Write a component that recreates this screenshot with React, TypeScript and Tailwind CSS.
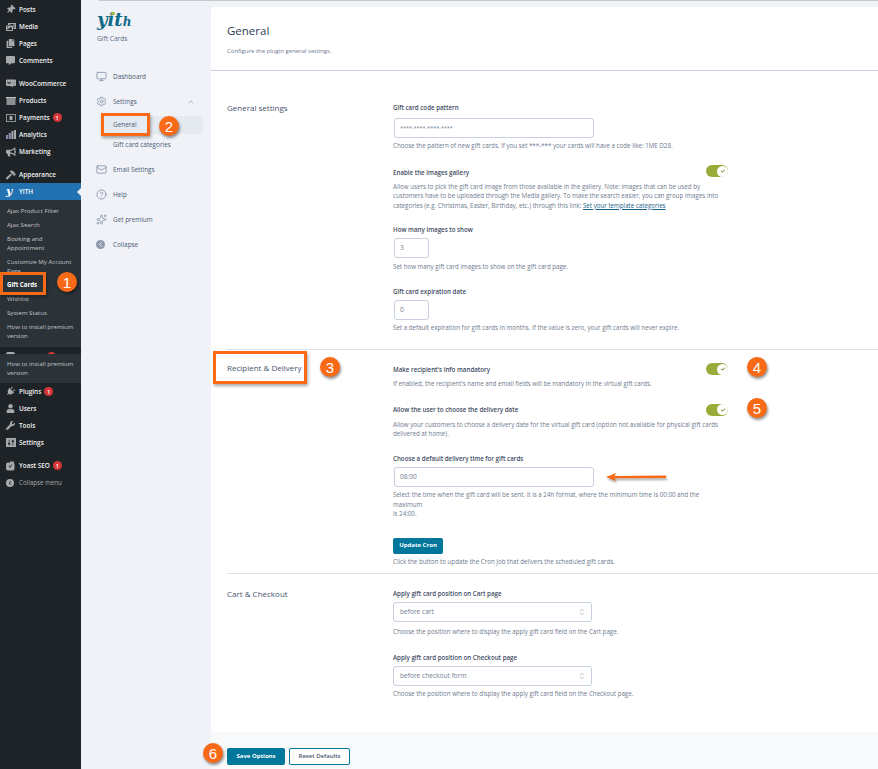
import React from "react";
import { FaThumbtack, FaPhotoVideo, FaCopy, FaCommentAlt, FaBullhorn, FaHammer, FaPlug, FaUser, FaWrench, FaCheck } from "react-icons/fa";
import { Monitor, Settings, Mail, CircleHelp, Sparkles, ChevronUp, ChevronLeft, ChevronsUpDown } from "lucide-react";

function Badge({ n }: { n: string }) {
  return <span className="ml-[3px] flex h-[9px] w-[9px] items-center justify-center rounded-full bg-[#d63638] text-[6px] font-semibold leading-none text-white">{n}</span>;
}

function Top({ icon, label, badge }: { icon: React.ReactNode; label: string; badge?: boolean }) {
  return (
    <div className="flex h-[17px] items-center pl-[6px] text-[6.4px] font-semibold text-[#f0f0f1]">
      <span className="flex w-[13px] text-[#a7aaad]">{icon}</span>
      <span>{label}</span>
      {badge && <Badge n="1" />}
    </div>
  );
}

function Sub({ children, cls }: { children: React.ReactNode; cls?: string }) {
  return <div className={`whitespace-nowrap pl-[7px] text-[6.1px] leading-[9px] ${cls ?? "text-[#c3c4c7]"}`}>{children}</div>;
}

function WooIcon() {
  return (
    <svg width="10" height="9" viewBox="0 0 10 9">
      <path d="M1 0.5h8a1 1 0 0 1 1 1v4.5a1 1 0 0 1-1 1H6.5L7 8.5 4.5 7H1a1 1 0 0 1-1-1V1.5a1 1 0 0 1 1-1z" fill="#a7aaad" />
      <path d="M1.5 2.5l.7 2.5.8-2 .8 2 .7-2.5M6.2 3.8h.6M8 3.8h.6" stroke="#1d2327" strokeWidth="0.6" fill="none" />
    </svg>
  );
}
function BoxIcon() {
  return (
    <svg width="10" height="8" viewBox="0 0 10 8">
      <rect x="0" y="0" width="10" height="1.6" fill="#c3c4c7" />
      <rect x="0.5" y="2" width="9" height="6" fill="#8c8f94" />
    </svg>
  );
}
function PayIcon() {
  return (
    <svg width="10" height="8" viewBox="0 0 10 8">
      <rect x="0.4" y="0.4" width="9.2" height="7.2" fill="none" stroke="#a7aaad" strokeWidth="0.8" />
      <rect x="3.5" y="2" width="3" height="4" fill="#a7aaad" />
    </svg>
  );
}
function BarsIcon() {
  return (
    <svg width="10" height="9" viewBox="0 0 10 9">
      <rect x="0" y="5" width="2" height="4" fill="#8d86a8" />
      <rect x="2.7" y="3" width="2" height="6" fill="#9a95b5" />
      <rect x="5.4" y="1" width="2" height="8" fill="#a7aaad" />
      <rect x="8" y="0" width="2" height="9" fill="#a7aaad" />
    </svg>
  );
}
function SlidersIcon() {
  return (
    <svg width="10" height="9" viewBox="0 0 10 9">
      <rect x="0" y="0" width="10" height="9" rx="0.5" fill="#a7aaad" />
      <path d="M3.2 1.5v6M6.8 1.5v6" stroke="#1d2327" strokeWidth="0.7" />
      <rect x="2.2" y="5" width="2" height="1.6" fill="#1d2327" />
      <rect x="5.8" y="2.4" width="2" height="1.6" fill="#1d2327" />
    </svg>
  );
}
function YoastIcon() {
  return (
    <svg width="10" height="10" viewBox="0 0 10 10">
      <rect x="0" y="1.5" width="8.5" height="8" rx="2" fill="#a7aaad" />
      <path d="M4 0.5h4l-2 8z" fill="#a7aaad" />
      <path d="M3 4.5l1.2 2 1.6-3" stroke="#1d2327" strokeWidth="0.8" fill="none" />
    </svg>
  );
}

function WpSidebar() {
  return (
    <aside className="flex h-full w-[81px] shrink-0 flex-col overflow-hidden bg-[#1d2327] pt-px">
      <Top icon={<FaThumbtack size={9} className="rotate-45" />} label="Posts" />
      <Top icon={<FaPhotoVideo size={10} />} label="Media" />
      <Top icon={<FaCopy size={9} />} label="Pages" />
      <Top icon={<FaCommentAlt size={9} />} label="Comments" />
      <div className="h-[6px]" />
      <Top icon={<WooIcon />} label="WooCommerce" />
      <Top icon={<BoxIcon />} label="Products" />
      <Top icon={<PayIcon />} label="Payments" badge />
      <Top icon={<BarsIcon />} label="Analytics" />
      <Top icon={<FaBullhorn size={10} />} label="Marketing" />
      <div className="h-[6px]" />
      <Top icon={<FaHammer size={10} />} label="Appearance" />
      <div className="relative flex h-[17px] items-center bg-[#2271b1] pl-[6px] text-[6.4px] font-semibold text-white">
        <span className="w-[13px] font-['DejaVu_Serif'] text-[11px] font-bold italic leading-none">y</span>
        <span>YITH</span>
        <span className="absolute right-0 top-[5px] h-0 w-0 border-y-[4px] border-r-[4px] border-y-transparent border-r-[#f0f2f7]" />
      </div>
      <div className="flex flex-col bg-[#2c3338] pb-[7px] pt-[6px]">
        <Sub cls="mb-[5px] text-[#c3c4c7]">Ajax Product Filter</Sub>
        <Sub cls="mb-[5px] text-[#c3c4c7]">Ajax Search</Sub>
        <Sub cls="mb-[5px] text-[#c3c4c7]">Booking and<br />Appointment</Sub>
        <Sub cls="mb-[5px] text-[#c3c4c7]">Customize My Account<br />Page</Sub>
        <Sub cls="mb-[5px] font-bold text-white">Gift Cards</Sub>
        <Sub cls="mb-[5px] text-[#c3c4c7]">Wishlist</Sub>
        <Sub cls="mb-[5px] text-[#c3c4c7]">System Status</Sub>
        <Sub>How to install premium<br />version</Sub>
      </div>
      <div className="flex h-[7px] items-start overflow-hidden pl-[6px] pt-[5px] text-[6.4px] font-semibold leading-[9px] text-[#f0f0f1]">
        <span className="w-[13px]"><span className="block h-[9px] w-[9px] rounded-[2px] bg-[#a7aaad]" /></span>
        <span>Elem</span>
        <span className="ml-[10px]"><Badge n="1" /></span>
      </div>
      <div className="bg-[#2c3338] pb-[6px] pt-[5px]">
        <Sub>How to install premium<br />version</Sub>
      </div>
      <Top icon={<FaPlug size={9} className="rotate-45" />} label="Plugins" badge />
      <Top icon={<FaUser size={9} />} label="Users" />
      <Top icon={<FaWrench size={9} />} label="Tools" />
      <Top icon={<SlidersIcon />} label="Settings" />
      <div className="h-[6px]" />
      <Top icon={<YoastIcon />} label="Yoast SEO" badge />
      <div className="flex h-[17px] items-center pl-[6px] text-[6.2px] text-[#a7aaad]">
        <span className="mr-[5px] flex h-[8px] w-[8px] items-center justify-center rounded-full bg-[#a7aaad]"><ChevronLeft size={6} strokeWidth={4} className="text-[#1d2327]" /></span>
        Collapse menu
      </div>
    </aside>
  );
}

function NavItem({ icon, label }: { icon: React.ReactNode; label: string }) {
  return (
    <div className="flex h-[25px] items-center pl-[15px] text-[6.4px] font-medium text-[#4a5a75]">
      <span className="flex w-[17px] text-[#8d99ae]">{icon}</span>
      {label}
    </div>
  );
}

function PluginNav() {
  return (
    <nav className="flex h-full w-[130px] shrink-0 flex-col pt-[8px]">
      <div className="relative ml-[16px] h-[25px] whitespace-nowrap pt-[2px] font-['DejaVu_Serif'] text-[18px] font-bold italic leading-[20px] text-[#0f6b85]">
        yit<span className="text-[12px]">h</span>
        <span className="absolute left-[14px] top-[4px] h-[3px] w-[4px] rounded-full bg-[#9dbb3c]" />
      </div>
      <div className="ml-[16px] mt-[1px] text-[6.6px] leading-[9px] text-[#5b6b84]">Gift Cards</div>
      <div className="h-[21px]" />
      <NavItem icon={<Monitor size={11} />} label="Dashboard" />
      <div className="flex h-[25px] items-center pl-[15px] pr-[16px] text-[6.4px] font-medium text-[#4a5a75]">
        <span className="flex w-[17px] text-[#8d99ae]"><Settings size={11} /></span>
        <span className="flex-1">Settings</span>
        <ChevronUp size={8} className="text-[#8d99ae]" />
      </div>
      <div className="ml-[22px] mr-[8px] mt-[2px] flex h-[18px] items-center rounded-[3px] bg-[#e5eaf1] pl-[10px] text-[6.4px] font-medium text-[#4a5a75]">General</div>
      <div className="mb-[2px] flex h-[21px] items-center pl-[32px] text-[6.4px] font-medium text-[#4a5a75]">Gift card categories</div>
      <NavItem icon={<Mail size={11} />} label="Email Settings" />
      <NavItem icon={<CircleHelp size={11} />} label="Help" />
      <NavItem icon={<Sparkles size={11} />} label="Get premium" />
      <NavItem icon={<span className="flex h-[9px] w-[9px] items-center justify-center rounded-full bg-[#8d99ae]"><ChevronLeft size={7} strokeWidth={3} className="text-white" /></span>} label="Collapse" />
    </nav>
  );
}

function Toggle() {
  return (
    <span className="relative flex h-[12px] w-[22px] shrink-0 items-center rounded-full bg-[#9aab39]">
      <span className="absolute right-0 flex h-[11px] w-[11px] items-center justify-center rounded-full bg-white">
        <FaCheck size={4} className="text-[#7b8c2e]" />
      </span>
    </span>
  );
}

function Label({ children, cls }: { children: React.ReactNode; cls?: string }) {
  return <div className={`text-[6.2px] font-semibold leading-[9px] text-[#3f4c63] ${cls ?? ""}`}>{children}</div>;
}

function Help({ children, cls }: { children: React.ReactNode; cls?: string }) {
  return <p className={`text-[6.2px] leading-[9.5px] text-[#6d7a8e] ${cls ?? ""}`}>{children}</p>;
}

function Field({ value, cls, select, small }: { value: string; cls: string; select?: boolean; small?: boolean }) {
  return (
    <div className={`flex h-[20px] items-center justify-between rounded-[3px] border border-[#c6d0de] bg-white pl-[5px] pr-[5px] text-[#707c8f] ${small ? "text-[5.4px]" : "text-[6.6px]"} ${cls}`}>
      <span>{value}</span>
      {select && <ChevronsUpDown size={8} className="text-[#8d99ae]" />}
    </div>
  );
}

function SectionTitle({ children }: { children: React.ReactNode }) {
  return <div className="w-[163px] shrink-0 text-[8px] font-medium leading-[10px] text-[#47556c]">{children}</div>;
}

function Main() {
  return (
    <main className="mt-[7px] flex h-[762px] min-w-0 flex-1 flex-col rounded-tl-[4px] bg-white">
      <header className="h-[64px] shrink-0 border-b border-[#ccd3e0] pl-[16px] pt-[16px]">
        <h1 className="text-[11.5px] font-medium leading-[16px] text-[#2f3b4f]">General</h1>
        <p className="mt-[8px] text-[6px] leading-[8px] text-[#6d7a8e]">Configure the plugin general settings.</p>
      </header>

      <section className="ml-[16px] flex h-[279px] shrink-0 border-b border-[#e0e2e6] pt-[32px]">
        <SectionTitle>General settings</SectionTitle>
        <div className="ml-[3px] w-[335px]">
          <Label>Gift card code pattern</Label>
          <Field value="****-****-****-****" small cls="ml-px mt-[6px] w-[200px]" />
          <Help cls="mt-[3px]">Choose the pattern of new gift cards. If you set ***-*** your cards will have a code like: 1ME D28.</Help>
          <div className="mt-[14.5px] flex items-start justify-between">
            <Label cls="mt-[3px]">Enable the images gallery</Label>
            <Toggle />
          </div>
          <Help cls="mt-[4.5px]">Allow users to pick the gift card image from those available in the gallery. Note: images that can be used by<br />customers have to be uploaded through the Media gallery. To make the search easier, you can group images into<br />categories (e.g. Christmas, Easter, Birthday, etc.) through this link: <span className="text-[#1a5f8a] underline">Set your template categories</span></Help>
          <Label cls="mt-[14.5px]">How many images to show</Label>
          <Field value="3" cls="ml-px mt-[4.5px] w-[35px]" />
          <Help cls="mt-[4px]">Set how many gift card images to show on the gift card page.</Help>
          <Label cls="mt-[15px]">Gift card expiration date</Label>
          <Field value="0" cls="ml-px mt-[4.5px] w-[35px]" />
          <Help cls="mt-[3px]">Set a default expiration for gift cards in months. If the value is zero, your gift cards will never expire.</Help>
        </div>
      </section>

      <section className="ml-[16px] flex h-[224px] shrink-0 border-b border-[#e0e2e6] pt-[13px]">
        <SectionTitle>Recipient &amp; Delivery</SectionTitle>
        <div className="ml-[3px] w-[335px]">
          <div className="flex items-center justify-between">
            <Label>Make recipient's info mandatory</Label>
            <Toggle />
          </div>
          <Help cls="mt-[4px]">If enabled, the recipient's name and email fields will be mandatory in the virtual gift cards.</Help>
          <div className="mt-[15px] flex items-center justify-between">
            <Label>Allow the user to choose the delivery date</Label>
            <Toggle />
          </div>
          <Help cls="mt-[4px]">Allow your customers to choose a delivery date for the virtual gift card (option not available for physical gift cards<br />delivered at home).</Help>
          <Label cls="mt-[15px]">Choose a default delivery time for gift cards</Label>
          <Field value="08:00" cls="ml-px mt-[4.5px] w-[200px]" />
          <Help cls="mt-[3px]">Select the time when the gift card will be sent. It is a 24h format, where the minimum time is 00:00 and the maximum<br />is 24:00.</Help>
          <button className="mt-[19px] flex h-[16px] w-[50px] items-center justify-center rounded-[2px] bg-[#00779b] text-[6px] font-bold text-white">Update Cron</button>
          <Help cls="mt-[3px]">Click the button to update the Cron Job that delivers the scheduled gift cards.</Help>
        </div>
      </section>

      <section className="ml-[16px] flex h-[158px] shrink-0 pt-[15px]">
        <SectionTitle>Cart &amp; Checkout</SectionTitle>
        <div className="ml-[3px] w-[335px]">
          <Label>Apply gift card position on Cart page</Label>
          <Field value="before cart" select cls="mt-[4px] w-[199px] pl-[6px]" />
          <Help cls="mt-[5px]">Choose the position where to display the apply gift card field on the Cart page.</Help>
          <Label cls="mt-[16px]">Apply gift card position on Checkout page</Label>
          <Field value="before checkout form" select cls="mt-[4.5px] w-[199px] pl-[6px]" />
          <Help cls="mt-[3px]">Choose the position where to display the apply gift card field on the Checkout page.</Help>
        </div>
      </section>

      <footer className="flex min-h-0 flex-1 items-start gap-[4px] bg-[#f8f9fb] pl-[16px] pt-[16px]">
        <button className="flex h-[17px] w-[58px] items-center justify-center rounded-[2px] bg-[#00779b] text-[6px] font-bold text-white">Save Options</button>
        <button className="flex h-[17px] w-[61px] items-center justify-center rounded-[2px] border border-[#00779b] bg-white text-[6px] font-semibold text-[#47556c]">Reset Defaults</button>
      </footer>
    </main>
  );
}

function Num({ n, cls }: { n: string; cls: string }) {
  return (
    <span className={`absolute flex h-[20px] w-[20px] items-center justify-center rounded-full bg-[#f96a16] font-['Liberation_Sans'] text-[15px] leading-none text-white shadow-[1px_2px_3px_rgba(0,0,0,0.45)] ${cls}`}>{n}</span>
  );
}

function Box({ cls }: { cls: string }) {
  return <span className={`absolute border-[3px] border-[#f96a16] shadow-[1px_2px_3px_rgba(0,0,0,0.35)] ${cls}`} />;
}

export default function App() {
  return (
    <div className="relative flex h-[769px] w-[878px] overflow-hidden bg-[#f0f2f7] font-['Open_Sans',sans-serif]">
      <WpSidebar />
      <PluginNav />
      <Main />
      <span className="absolute left-[99px] right-0 top-0 h-px bg-[#c5c8cf]" />
      <Box cls="left-0 top-[272px] h-[23px] w-[46px]" />
      <Box cls="left-[101px] top-[113px] h-[23px] w-[49px]" />
      <Box cls="left-[213px] top-[351px] h-[33px] w-[94px]" />
      <Num n="1" cls="left-[57px] top-[272px]" />
      <Num n="2" cls="left-[159px] top-[116px]" />
      <Num n="3" cls="left-[320px] top-[357px]" />
      <Num n="4" cls="left-[747px] top-[357px]" />
      <Num n="5" cls="left-[747px] top-[398px]" />
      <Num n="6" cls="left-[203px] top-[743px]" />
      <svg className="absolute left-[604px] top-[471px] drop-shadow-[1px_2px_1px_rgba(0,0,0,0.35)]" width="66" height="12" viewBox="0 0 66 12">
        <path d="M2 6 L12 2 L10.5 5 L62 4.6 L62 7 L10.5 7.2 L12 10 Z" fill="#f96a16" />
      </svg>
    </div>
  );
}
